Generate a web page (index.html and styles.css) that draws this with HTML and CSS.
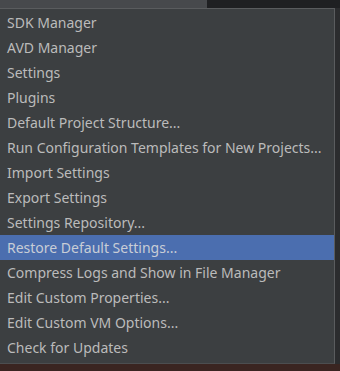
FILE: index.html
```html
<!DOCTYPE html>
<html>
<head>
<meta charset="utf-8">
<link rel="stylesheet" href="styles.css">
</head>
<body>
<div class="top">
  <div class="top-left"></div>
  <div class="top-right"></div>
</div>
<div class="middle">
  <ul class="menu">
    <li>SDK Manager</li>
    <li>AVD Manager</li>
    <li>Settings</li>
    <li>Plugins</li>
    <li>Default Project Structure...</li>
    <li>Run Configuration Templates for New Projects...</li>
    <li>Import Settings</li>
    <li>Export Settings</li>
    <li>Settings Repository...</li>
    <li class="selected">Restore Default Settings...</li>
    <li>Compress Logs and Show in File Manager</li>
    <li>Edit Custom Properties...</li>
    <li>Edit Custom VM Options...</li>
    <li>Check for Updates</li>
  </ul>
  <div class="side"></div>
</div>
<div class="bottom"></div>
</body>
</html>
```
FILE: styles.css
```css
html, body {
  margin: 0;
  padding: 0;
  width: 340px;
  height: 371px;
  overflow: hidden;
  background: #3a2521;
}
.top {
  display: flex;
  height: 8px;
}
.top-left {
  width: 207px;
  background: #47494c;
}
.top-right {
  flex: 1;
  background: #1f2022;
}
.middle {
  display: flex;
  background: #2b2c2e;
}
.menu {
  list-style: none;
  margin: 0;
  padding: 1px 0 3px 0;
  width: 335px;
  box-sizing: border-box;
  background: #3c3f41;
  border-top: 1px solid #5a5c5e;
  border-right: 1px solid #5a5c5e;
  border-bottom: 1px solid #4c4e50;
  font-family: "Noto Sans", "Open Sans", sans-serif;
  font-size: 14px;
  color: #bbbbbb;
}
.menu li {
  height: 25px;
  line-height: 26px;
  padding-left: 7px;
  white-space: nowrap;
}
.menu li.selected {
  background: #4b6eaf;
  color: #c8cdd6;
}
.side {
  flex: 1;
}
.bottom {
  height: 10px;
}
```
